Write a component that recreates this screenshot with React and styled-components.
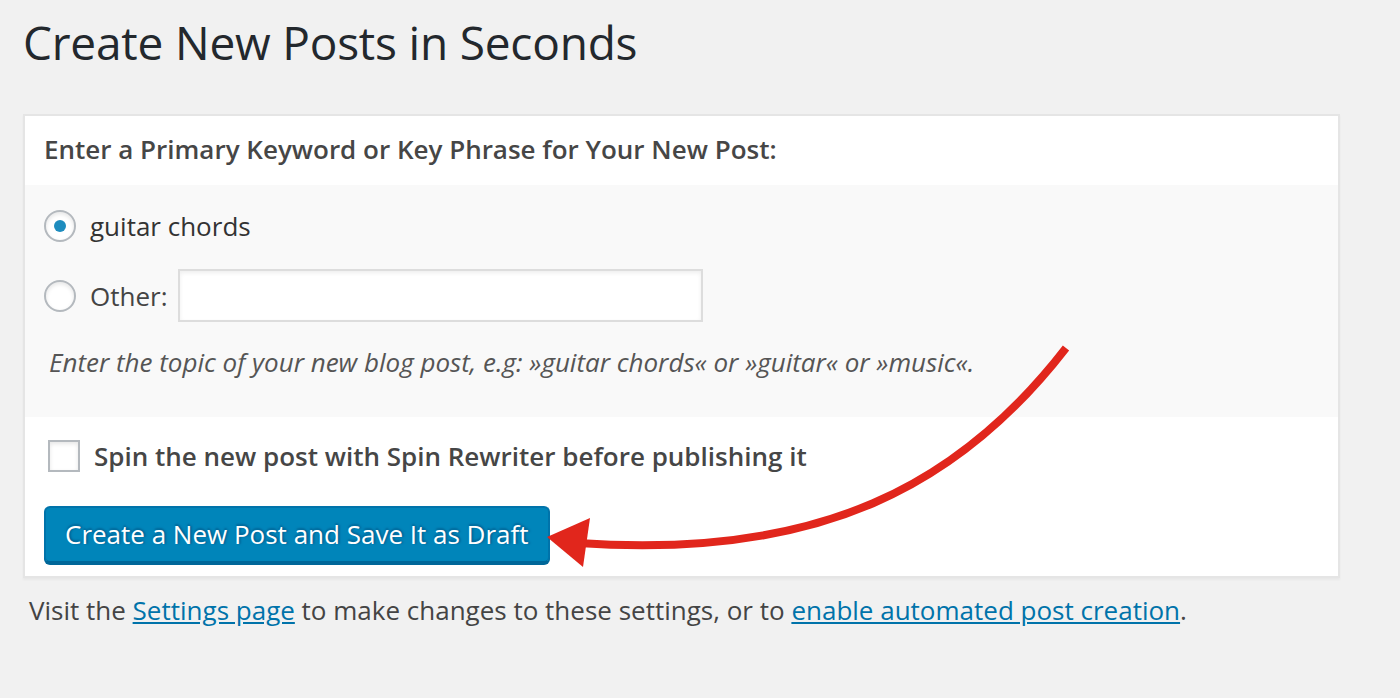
import React from 'react';
import styled, { createGlobalStyle } from 'styled-components';

const GlobalStyle = createGlobalStyle`
    html, body {
        margin: 0;
        padding: 0;
        background: #f1f1f1;
        font-family: "Open Sans", "Liberation Sans", sans-serif;
    }
`;

const Page = styled.div`
    position: relative;
    width: 1400px;
    height: 698px;
    overflow: hidden;
    padding: 0 60px 0 23px;
    box-sizing: border-box;
`;

const Title = styled.h1`
    margin: 14px 0 44px;
    font-size: 46px;
    line-height: 56px;
    font-weight: 400;
    color: #23282d;
    letter-spacing: -0.2px;
`;

const Card = styled.div`
    width: 1317px;
    box-sizing: border-box;
    background: #fff;
    border: 2px solid #e5e5e5;
    box-shadow: 0 2px 2px rgba(0, 0, 0, 0.04);
`;

const CardHeader = styled.div`
    padding: 15px 19px 18px;
    font-size: 26px;
    line-height: 36px;
    font-weight: 600;
    color: #464646;
`;

const Section = styled.div`
    background: ${(p) => (p.$shaded ? '#f9f9f9' : '#fff')};
    padding: ${(p) => p.$pad};
    display: flex;
    flex-direction: column;
    align-items: flex-start;
`;

const Row = styled.label`
    display: flex;
    align-items: center;
    height: ${(p) => p.$height || 36}px;
    margin-top: ${(p) => p.$gap || 0}px;
    font-size: 26px;
    color: ${(p) => p.$color || '#333'};
    font-weight: ${(p) => (p.$bold ? 600 : 400)};
`;

const Radio = styled.span`
    width: 32px;
    height: 32px;
    box-sizing: border-box;
    border: 2px solid #b4b9be;
    border-radius: 50%;
    background: #fff;
    box-shadow: inset 0 2px 4px rgba(0, 0, 0, 0.1);
    display: flex;
    align-items: center;
    justify-content: center;
    margin-right: 14px;
    flex-shrink: 0;
    &::after {
        content: '';
        width: 12px;
        height: 12px;
        border-radius: 50%;
        background: ${(p) => (p.$checked ? '#1e8cbe' : 'transparent')};
    }
`;

const Checkbox = styled.span`
    width: 32px;
    height: 32px;
    box-sizing: border-box;
    border: 2px solid #b4b9be;
    background: #fff;
    box-shadow: inset 0 2px 4px rgba(0, 0, 0, 0.1);
    margin: 0 14px 0 4px;
    flex-shrink: 0;
`;

const TextInput = styled.span`
    display: block;
    width: 525px;
    height: 53px;
    box-sizing: border-box;
    margin-left: 10px;
    background: #fff;
    border: 2px solid #ddd;
    box-shadow: inset 0 2px 4px rgba(0, 0, 0, 0.07);
`;

const Hint = styled.p`
    margin: 22px 0 0 5px;
    font-size: 26px;
    line-height: 36px;
    font-style: italic;
    color: #555;
`;

const Button = styled.button`
    margin-top: 32px;
    height: 57px;
    padding: 0 19px 2px;
    box-sizing: border-box;
    border: 2px solid #0073aa;
    border-bottom-color: #006799;
    border-radius: 6px;
    background: #0085ba;
    box-shadow: 0 2px 0 #006799;
    color: #fff;
    font-family: inherit;
    font-size: 26px;
    line-height: 36px;
    text-shadow: 0 -2px 2px #006799, 2px 0 2px #006799;
    cursor: pointer;
`;

const Footer = styled.p`
    margin: 14px 0 0 6px;
    font-size: 26px;
    line-height: 36px;
    color: #444;
    a {
        color: #0073aa;
        text-decoration: underline;
    }
`;

const ArrowLayer = styled.svg`
    position: absolute;
    left: 0;
    top: 0;
    pointer-events: none;
`;

function Arrow() {
    return (
        <ArrowLayer width="1400" height="698" viewBox="0 0 1400 698">
            <path d="M1066 348 C 960 485 820 560 578 543" fill="none" stroke="#e1261c" strokeWidth="8" strokeLinecap="butt" />
            <polygon points="547,537 590,518 583,567" fill="#e1261c" />
        </ArrowLayer>
    );
}

export default function App() {
    return (
        <Page>
            <GlobalStyle />
            <Title>Create New Posts in Seconds</Title>
            <Card>
                <CardHeader>Enter a Primary Keyword or Key Phrase for Your New Post:</CardHeader>
                <Section $shaded $pad="23px 19px 37px">
                    <Row>
                        <Radio $checked />
                        guitar chords
                    </Row>
                    <Row $height={53} $gap={25} $color="#444">
                        <Radio />
                        Other:
                        <TextInput />
                    </Row>
                    <Hint>Enter the topic of your new blog post, e.g: »guitar chords« or »guitar« or »music«.</Hint>
                </Section>
                <Section $pad="21px 19px 13px">
                    <Row $bold $color="#464646">
                        <Checkbox />
                        Spin the new post with Spin Rewriter before publishing it
                    </Row>
                    <Button>Create a New Post and Save It as Draft</Button>
                </Section>
            </Card>
            <Footer>
                Visit the <a href="#settings">Settings page</a> to make changes to these settings, or to{' '}
                <a href="#auto">enable automated post creation</a>.
            </Footer>
            <Arrow />
        </Page>
    );
}
